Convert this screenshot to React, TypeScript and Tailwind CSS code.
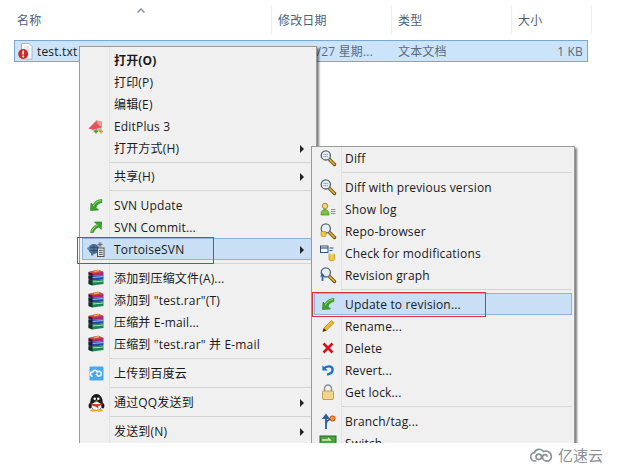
import React from "react";

const Magnifier = ({ glass = "#e8eef5", mark, extra }: { glass?: string; mark?: React.ReactNode; extra?: React.ReactNode }) => (
  <svg width="18" height="18" viewBox="0 0 18 18">
    <path d="M9.5 9.5 L15.5 15.5" stroke="#6e5518" strokeWidth="3.4" strokeLinecap="round" />
    <path d="M10 10 L15.3 15.3" stroke="#e6b846" strokeWidth="1.5" strokeLinecap="round" />
    <circle cx="6.8" cy="6.4" r="4.6" fill={glass} stroke="#55666f" strokeWidth="1.3" />
    {mark}
    {extra}
  </svg>
);

const DiffMark = <path d="M4.5 5.4h4.6M4.5 7.6h4.6" stroke="#6d8cab" strokeWidth="1" strokeDasharray="1 .6" />;

const GreenDown = () => (
  <svg width="16" height="16" viewBox="0 0 16 16">
    <path d="M2.5 13.5 3 6 5 8C6.5 4.5 9.5 2.8 13.8 2.5V5.5C11 6 9 7.5 8 10.5L10.5 13Z" fill="#3aa52c" stroke="#1f7a22" strokeWidth=".6" />
    <path d="M5.2 9.2C6.6 6 9.4 4 13 3.5" stroke="#9fdf63" strokeWidth="1" fill="none" />
  </svg>
);

const GreenUp = () => (
  <svg width="16" height="16" viewBox="0 0 16 16">
    <path d="M13.8 3 6.5 3 9 5.5C5.5 7 3 10 2.5 13.5H5.5C6 11 8 9 11 8L13.2 10.5Z" fill="#3aa52c" stroke="#1f7a22" strokeWidth=".6" />
    <path d="M3.6 12.8C4.4 10 6.6 7.4 10 5.8" stroke="#9fdf63" strokeWidth="1" fill="none" />
  </svg>
);

const EditPlus = () => (
  <svg width="18" height="18" viewBox="0 0 18 18">
    <path d="M1.5 11.5 9.5 3.5 14.5 4.5 15 10.5 6.5 13Z" fill="#e4555c" />
    <path d="M9.5 3.5 14.5 4.5 15 10.5 10.5 7Z" fill="#f29a9a" />
    <path d="M5 13 15 10.5 14 14 7 15Z" fill="#bdbdb0" />
    <path d="M7 14.5h4M9 12.5v4" stroke="#5a9a2c" strokeWidth="1.6" />
    <path d="M12 14.5h4M14 12.5v4" stroke="#c7a52c" strokeWidth="1.5" />
  </svg>
);

const Tortoise = () => (
  <svg width="18" height="18" viewBox="0 0 18 18">
    <ellipse cx="6.8" cy="9" rx="5.4" ry="5" fill="#4f7199" />
    <path d="M3.5 7.5h7M3.5 10.5h7M6.8 4.5v9" stroke="#2f4866" strokeWidth=".8" />
    <circle cx="1.6" cy="8.6" r="1.4" fill="#6b87a6" />
    <rect x="4" y="13" width="2.4" height="2.4" fill="#4f7199" />
    <rect x="10.5" y="8" width="6.5" height="8.5" fill="#e8e8e8" stroke="#444" strokeWidth=".9" />
    <path d="M12 10.4h3.6M12 12.4h3.6M12 14.4h3.6" stroke="#444" strokeWidth=".9" />
    <path d="M13 2v5M10.6 4.5h5M11.4 3l3.2 3M14.6 3l-3.2 3" stroke="#6b6b6b" strokeWidth=".9" />
  </svg>
);

const Rar = () => (
  <svg width="18" height="18" viewBox="0 0 18 18">
    <path d="M1.5 3 11 .8 16.5 3 16.5 6.2 5.5 7 1.5 5.6Z" fill="#a52a7e" />
    <path d="M1.5 3 11 .8 16.5 3 5.5 4.4Z" fill="#d8503a" />
    <path d="M7 2.6 12 1.6" stroke="#eec24a" strokeWidth="1.2" />
    <path d="M1.5 7 5.5 7 16.5 6.2 16.5 10.6 5.5 11.5 1.5 10Z" fill="#2448a6" />
    <path d="M5.5 8.4 16.5 7.6" stroke="#a3c4ee" strokeWidth="1" />
    <path d="M1.5 11.2 5.5 11.5 16.5 10.6 16.5 15 5.5 16.6 1.5 15Z" fill="#1b8653" />
    <path d="M5.5 13 16.5 12" stroke="#a6e0b0" strokeWidth="1" />
    <path d="M1.5 3.2 5.5 4.6V16.6L1.5 15Z" fill="#141414" opacity=".75" />
  </svg>
);

const Baidu = () => (
  <svg width="15" height="15" viewBox="0 0 15 15">
    <rect x=".5" y=".5" width="14" height="14" rx="1" fill="#4aa9ec" />
    <path d="M3.6 10.4A2.3 2.3 0 0 1 4 5.8C5 3.6 7.6 3.8 8.3 6c1.2-1.4 4.4-.6 4 2-.2 1.5-1.6 2.4-3 2.2L7 7.8" fill="none" stroke="#fff" strokeWidth="1.5" />
  </svg>
);

const QQ = () => (
  <svg width="17" height="19" viewBox="0 0 16 18">
    <ellipse cx="8" cy="9" rx="6" ry="8" fill="#1a1a1a" />
    <ellipse cx="1.9" cy="12" rx="1.4" ry="2.6" fill="#1a1a1a" />
    <ellipse cx="14.1" cy="12" rx="1.4" ry="2.6" fill="#1a1a1a" />
    <ellipse cx="8" cy="12.5" rx="4.6" ry="4" fill="#f4f4f4" />
    <circle cx="6.3" cy="5.5" r="1.2" fill="#fff" />
    <circle cx="9.7" cy="5.5" r="1.2" fill="#fff" />
    <path d="M2.5 9.5Q8 12 13.5 9.5L13.5 11Q10 12.6 9.4 12.6L10 15 7.6 13Q4 12.5 2.5 11Z" fill="#d82a20" />
    <path d="M6 7.5Q8 6.6 10 7.5 8 9 6 7.5Z" fill="#f0b020" />
    <ellipse cx="5" cy="16.6" rx="3" ry="1.1" fill="#f0a818" />
    <ellipse cx="11" cy="16.6" rx="3" ry="1.1" fill="#f0a818" />
  </svg>
);

const ShowLog = () => (
  <svg width="17" height="16" viewBox="0 0 17 16">
    <circle cx="5" cy="5" r="2.8" fill="#efd27a" stroke="#8a7028" strokeWidth=".7" />
    <path d="M1 14c0-4 1.6-5.4 4-5.4S9 10 9 14Z" fill="#7cc23e" stroke="#4a8a20" strokeWidth=".7" />
    <path d="M11 8.5h4.5M11 10.5h4.5M11 12.5h4.5" stroke="#7a8a7a" strokeWidth=".9" />
  </svg>
);

const CheckMod = () => (
  <svg width="17" height="17" viewBox="0 0 17 17">
    <rect x=".5" y="1" width="7.5" height="6.5" fill="#fff" stroke="#34507a" strokeWidth="1" />
    <path d="M.5 3h7.5" stroke="#34507a" strokeWidth="1.2" />
    <path d="M9.5 3h4M9.5 5.5h3" stroke="#34507a" strokeWidth="1" />
    <path d="M9 9h5.5v5.5l-1 1.2h-3.5l-1-1.2Z" fill="#f3c83c" stroke="#b08a20" strokeWidth=".7" />
    <ellipse cx="11.7" cy="9" rx="2.7" ry="1" fill="#f9e27a" />
  </svg>
);

const Pencil = () => (
  <svg width="16" height="16" viewBox="0 0 16 16">
    <path d="M3.8 10.2 11.5 2.5l2.5 2.3-7.7 7.7-3.5 1Z" fill="#eeb92f" stroke="#a57d14" strokeWidth=".7" />
    <path d="M2.8 13.5 3.8 10.2 6.3 12.5Z" fill="#3a2c10" />
  </svg>
);

const Cross = () => (
  <svg width="16" height="16" viewBox="0 0 16 16">
    <path d="M3.5 3.5 12.5 12.5M12.5 3.5 3.5 12.5" stroke="#d6121b" strokeWidth="2.6" />
  </svg>
);

const Revert = () => (
  <svg width="16" height="16" viewBox="0 0 16 16">
    <path d="M4 6.5C6.5 3.6 12 3.6 12.6 7.2 13 10 10.4 12 7 12.6" fill="none" stroke="#1e73c4" strokeWidth="2.4" />
    <path d="M2.4 3.2v5.4h5.4Z" fill="#1e73c4" />
  </svg>
);

const Lock = () => (
  <svg width="16" height="18" viewBox="0 0 16 18">
    <path d="M4.5 8V5.5a3.5 3.5 0 0 1 7 0V8" fill="none" stroke="#8e8e8e" strokeWidth="1.4" />
    <rect x="2.5" y="8" width="11" height="8.5" rx=".8" fill="#f0d488" stroke="#b19140" strokeWidth=".8" />
  </svg>
);

const Branch = () => (
  <svg width="18" height="18" viewBox="0 0 18 18">
    <path d="M7 17V3M7 12C7 9 9 8 12 7" fill="none" stroke="#2b5e9e" strokeWidth="1.8" />
    <path d="M2.8 7 7 1.5 11 7Z" fill="#2b5e9e" />
    <circle cx="13.5" cy="6.5" r="2.6" fill="#f0a020" stroke="#c9391c" strokeWidth="1" />
  </svg>
);

const Switch = () => (
  <svg width="18" height="16" viewBox="0 0 18 16">
    <rect x="1" y="1" width="16" height="13" fill="#49a53a" stroke="#1f6b2a" />
    <path d="M3 5h8l-2-2M15 9H6l2 3" fill="none" stroke="#d8f2c4" strokeWidth="1.4" />
  </svg>
);

const Arrow = () => (
  <span className="absolute right-[9px] top-[7px] w-0 h-0 border-y-[4px] border-y-transparent border-l-[4px] border-l-[#222]" />
);

type Entry = {
  label?: string;
  icon?: React.ReactNode;
  bold?: boolean;
  arrow?: boolean;
  active?: boolean;
  sep?: boolean;
  h?: string;
};

function Menu({ items, className, textClass }: { items: Entry[]; className: string; textClass: string }) {
  return (
    <div className={"absolute flex flex-col bg-[#f0f0f0] border border-[#9a9a9a] shadow-[2px_2px_2px_rgba(0,0,0,0.5)] " + className}>
      <div className="absolute left-[29px] top-0 bottom-0 w-px bg-[#e2e2e2]" />
      {items.map((it, i) =>
        it.sep ? (
          <div key={i} className={"flex items-center pl-[29px] pr-[2px] shrink-0 " + (it.h ?? "h-[7px]")}>
            <div className="w-full h-px bg-[#d4d4d4]" />
          </div>
        ) : (
          <div
            key={i}
            className={
              "relative flex items-center h-[22px] shrink-0 mx-[2px] border " +
              (it.active ? "bg-[#c8dff5] border-[#8db4dc]" : "border-transparent")
            }
          >
            <span className="w-[26px] shrink-0 flex items-center justify-center">{it.icon}</span>
            <span className={"pt-[2px] text-[12px] tracking-[0.17px] text-[#1a1a1a] whitespace-nowrap " + textClass + (it.bold ? " font-bold" : "")}>{it.label}</span>
            {it.arrow && <Arrow />}
          </div>
        )
      )}
    </div>
  );
}

const mainItems: Entry[] = [
  { label: "打开(O)", bold: true },
  { label: "打印(P)" },
  { label: "编辑(E)" },
  { label: "EditPlus 3", icon: <EditPlus /> },
  { label: "打开方式(H)", arrow: true },
  { sep: true, h: "h-[6px]" },
  { label: "共享(H)", arrow: true },
  { sep: true },
  { label: "SVN Update", icon: <GreenDown /> },
  { label: "SVN Commit...", icon: <GreenUp /> },
  { label: "TortoiseSVN", icon: <Tortoise />, arrow: true, active: true },
  { sep: true },
  { label: "添加到压缩文件(A)...", icon: <Rar /> },
  { label: "添加到 \"test.rar\"(T)", icon: <Rar /> },
  { label: "压缩并 E-mail...", icon: <Rar /> },
  { label: "压缩到 \"test.rar\" 并 E-mail", icon: <Rar /> },
  { sep: true },
  { label: "上传到百度云", icon: <Baidu /> },
  { sep: true },
  { label: "通过QQ发送到", icon: <QQ />, arrow: true },
  { sep: true },
  { label: "发送到(N)", arrow: true },
];

const RepoExtra = <path d="M2 9.5h5v4.2l-.8.8H2.8l-.8-.8Z" fill="#efc83e" stroke="#a98a20" strokeWidth=".6" />;
const GraphExtra = <path d="M1 10.5 3.5 7 6 10.5H4.4V15H2.6V10.5Z" fill="#3466a6" />;

const subItems: Entry[] = [
  { label: "Diff", icon: <Magnifier mark={DiffMark} /> },
  { sep: true },
  { label: "Diff with previous version", icon: <Magnifier mark={DiffMark} /> },
  { label: "Show log", icon: <ShowLog /> },
  { label: "Repo-browser", icon: <Magnifier extra={RepoExtra} /> },
  { label: "Check for modifications", icon: <CheckMod /> },
  { label: "Revision graph", icon: <Magnifier extra={GraphExtra} /> },
  { sep: true },
  { label: "Update to revision...", icon: <GreenDown />, active: true },
  { label: "Rename...", icon: <Pencil /> },
  { label: "Delete", icon: <Cross /> },
  { label: "Revert...", icon: <Revert /> },
  { label: "Get lock...", icon: <Lock /> },
  { sep: true },
  { label: "Branch/tag...", icon: <Branch /> },
  { label: "Switch", icon: <Switch /> },
];

const Header = ({ label, className }: { label: string; className: string }) => (
  <div className={"h-[28px] flex items-center pl-[6px] pt-[2px] border-r border-[#eceff2] text-[12px] tracking-[0.17px] text-[#4c607a] shrink-0 " + className}>
    {label}
  </div>
);

export default function App() {
  return (
    <div
      className="w-[620px] h-[467px] bg-white overflow-hidden"
      style={{ fontFamily: '"Open Sans","Noto Sans CJK SC",sans-serif' }}
    >
      <div className="relative h-[443px] overflow-hidden pt-[6px]">
        <svg className="absolute left-[137px] top-[8px]" width="8" height="5" viewBox="0 0 8 5">
          <path d="M.5 4.5 4 1l3.5 3.5" fill="none" stroke="#7e93a8" strokeWidth="1.4" />
        </svg>
        <div className="flex pl-[11px]">
          <Header label="名称" className="w-[261px]" />
          <Header label="修改日期" className="w-[120px]" />
          <Header label="类型" className="w-[120px]" />
          <Header label="大小" className="w-[80px]" />
        </div>
        <div className="mt-[6px] ml-[14px] w-[574px] h-[22px] flex items-center bg-[#cce4fa] border border-[#7aa7d3] text-[12px] tracking-[0.17px] text-[#5a6b7d]">
          <span className="ml-[3px] w-[16px] h-[16px] shrink-0">
            <svg width="16" height="17" viewBox="0 0 16 17">
              <path d="M3.5 .5h7.5l3 3v12.5h-10.5Z" fill="#fff" stroke="#a9b2bb" />
              <path d="M6 4h5M6 6h6M6 8h6" stroke="#cfd6dc" />
              <circle cx="5.2" cy="11" r="5" fill="#c92a25" />
              <path d="M5.2 7.6v4" stroke="#fff" strokeWidth="1.7" />
              <circle cx="5.2" cy="13.4" r="1" fill="#fff" />
            </svg>
          </span>
          <span className="ml-[3px] w-[218px] text-[#1a1a1a] shrink-0 pt-[1px]">test.txt</span>
          <span className="w-[118px] text-right shrink-0 pt-[1px]">3/27 星期...</span>
          <span className="ml-[25px] w-[100px] shrink-0 pt-[1px]">文本文档</span>
          <span className="flex-1 text-right pr-[4px] pt-[1px]">1 KB</span>
        </div>

        <Menu items={mainItems} textClass="ml-[5px]" className="left-[79px] top-[46px] w-[238px] py-[2px]" />
        <Menu items={subItems} textClass="ml-[4px]" className="left-[311px] top-[146px] w-[264px]" />

        <div className="absolute left-[77px] top-[237px] w-[137px] h-[27px] border border-[#d0343e]" />
        <div className="absolute left-[312px] top-[292px] w-[174px] h-[25px] border border-[#d0343e]" />
      </div>
      <div className="flex justify-end items-start gap-[5px] pr-[17px] pt-[4px] h-[24px]">
        <svg width="23" height="16" viewBox="0 0 25 16">
          <path d="M7 14.5H5.5a4.5 4.5 0 0 1-.6-9C6 1.6 12 .2 14.6 4.2c4-1.6 8.6 1 8.6 5.4 0 3-2.2 5-5 5-2.6 0-4.6-2-4.6-4.2 0-1.6 1.2-2.8 2.6-2.8s2.4 1 2.4 2.2" fill="none" stroke="#8a9095" strokeWidth="1.8" />
          <circle cx="9.5" cy="10" r="3" fill="none" stroke="#8a9095" strokeWidth="1.8" />
        </svg>
        <span className="text-[15px] leading-none text-[#8a9095]" style={{ fontFamily: '"Noto Sans CJK SC",sans-serif' }}>亿速云</span>
      </div>
    </div>
  );
}
